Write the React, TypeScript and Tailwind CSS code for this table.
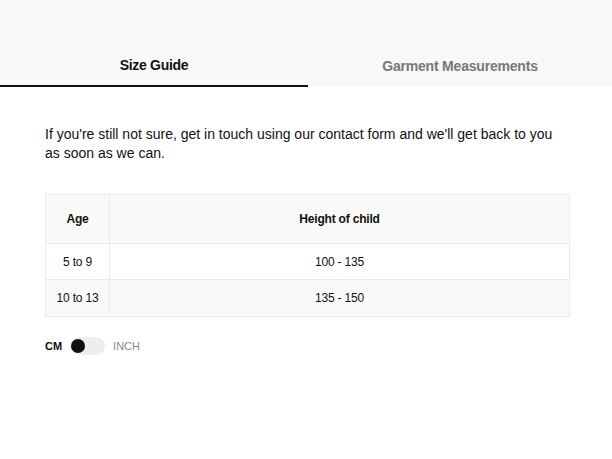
const rows = [
  { age: "5 to 9", height: "100 - 135" },
  { age: "10 to 13", height: "135 - 150" },
];

export default function App() {
  return (
    <div
      className="min-h-[459px] w-full bg-white text-[#111]"
      style={{ fontFamily: '"Liberation Sans", Arial, sans-serif' }}
    >
      <div className="flex h-[87px] items-end bg-[#f8f8f8]">
        <button className="flex h-[44px] w-[308px] items-center justify-center border-b-2 border-[#111] pt-[2px] text-[14px] font-bold tracking-[-0.3px] text-[#111]">
          Size Guide
        </button>
        <button className="flex h-[44px] flex-1 items-center justify-center pt-[2px] text-[14px] font-bold tracking-[-0.2px] text-[#777]">
          Garment Measurements
        </button>
      </div>

      <div className="pl-[45px] pr-[42px] pt-[38px]">
        <p className="text-[14px] leading-[19px] text-[#111]">
          If you're still not sure, get in touch using our contact form and
          we'll get back to you as soon as we can.
        </p>

        <table className="mt-[31px] w-full border-collapse border border-[#ebebeb] text-[12px] tracking-[-0.2px]">
          <thead>
            <tr className="h-[49px] bg-[#f9f9f9]">
              <th className="w-[64px] border border-[#ebebeb] font-bold">Age</th>
              <th className="border border-[#ebebeb] font-bold">Height of child</th>
            </tr>
          </thead>
          <tbody>
            {rows.map((row, i) => (
              <tr
                key={row.age}
                className={i % 2 ? "h-[37px] bg-[#f9f9f9]" : "h-[36px] bg-white"}
              >
                <td className="border border-[#ebebeb] text-center">{row.age}</td>
                <td className="border border-[#ebebeb] text-center">{row.height}</td>
              </tr>
            ))}
          </tbody>
        </table>

        <div className="mt-[20px] flex items-center gap-[8px] text-[11px]">
          <span className="font-bold text-[#111]">CM</span>
          <div className="flex h-[18px] w-[35px] items-center rounded-full bg-[#eeeeee] px-[1px]">
            <span className="h-[14px] w-[14px] rounded-full bg-[#111]" />
          </div>
          <span className="text-[#888]">INCH</span>
        </div>
      </div>
    </div>
  );
}
